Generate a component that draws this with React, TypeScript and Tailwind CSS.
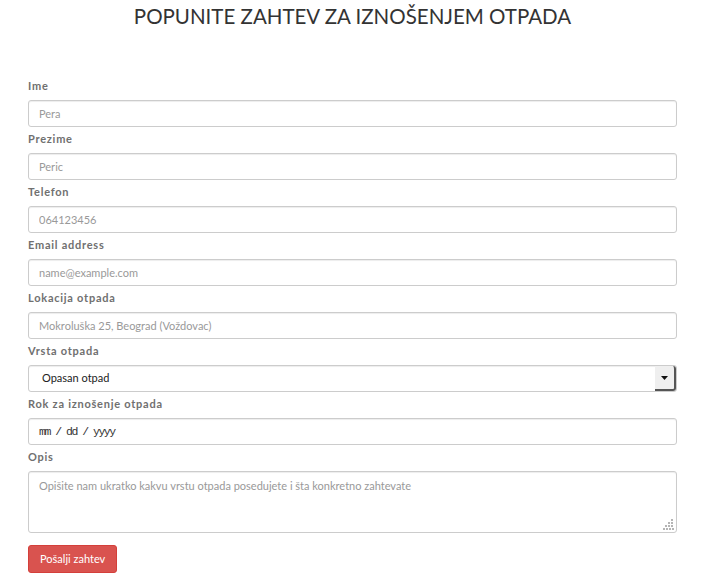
import React from "react";

const inputCls =
  "block w-full h-[27px] px-[10px] rounded-[3px] border border-[#cccccc] bg-white text-[11px] text-[#555] shadow-[inset_0_1px_1px_rgba(0,0,0,0.075)] outline-none placeholder:text-[#999]";

function Label({ children }: { children: React.ReactNode }) {
  return (
    <label className="block mt-[4px] mb-[6px] h-[16px] leading-[16px] text-[11px] font-bold text-[#707070] tracking-[0.75px]">
      {children}
    </label>
  );
}

export default function App() {
  const fields = [
    { label: "Ime", placeholder: "Pera" },
    { label: "Prezime", placeholder: "Peric" },
    { label: "Telefon", placeholder: "064123456" },
    { label: "Email address", placeholder: "name@example.com" },
    { label: "Lokacija otpada", placeholder: "Mokroluška 25, Beograd (Voždovac)" },
  ];

  return (
    <div className="min-h-[587px] bg-white font-['Lato','Liberation_Sans',sans-serif] text-[#333]">
      <h2 className="pt-[1px] h-[32px] leading-[30px] text-center text-[20.5px] font-normal text-[#333]">
        POPUNITE ZAHTEV ZA IZNOŠENJEM OTPADA
      </h2>

      <form className="mx-[28px] mt-[46px]" onSubmit={(e) => e.preventDefault()}>
        {fields.map((f) => (
          <div key={f.label}>
            <Label>{f.label}</Label>
            <input type="text" className={inputCls} placeholder={f.placeholder} />
          </div>
        ))}

        {/* Vrsta otpada */}
        <Label>Vrsta otpada</Label>
        <div className="relative flex h-[27px] w-full items-center rounded-[3px] border border-[#cccccc] bg-white shadow-[inset_0_1px_1px_rgba(0,0,0,0.075)]">
          <span className="pl-[13px] text-[11px] text-[#222]">Opasan otpad</span>
          <span className="ml-auto flex h-full w-[21px] items-center justify-center rounded-r-[3px] bg-[#efefef] border-r-2 border-b-2 border-[#555]">
            <svg width="7" height="4" viewBox="0 0 7 4">
              <path d="M0 0h7L3.5 4z" fill="#111" />
            </svg>
          </span>
        </div>

        {/* Rok */}
        <Label>Rok za iznošenje otpada</Label>
        <div className="flex h-[27px] w-full items-center rounded-[3px] border border-[#cccccc] bg-white px-[10px] shadow-[inset_0_1px_1px_rgba(0,0,0,0.075)]">
          <span className="font-['Liberation_Mono',monospace] text-[11.5px] tracking-[-1.5px] text-[#333]">
            mm / dd / yyyy
          </span>
        </div>

        {/* Opis */}
        <Label>Opis</Label>
        <div className="relative">
          <textarea
            className="block w-full h-[62px] resize-none px-[10px] py-[6px] rounded-[3px] border border-[#cccccc] bg-white text-[11px] text-[#555] shadow-[inset_0_1px_1px_rgba(0,0,0,0.075)] outline-none placeholder:text-[#999]"
            placeholder="Opišite nam ukratko kakvu vrstu otpada posedujete i šta konkretno zahtevate"
          />
          {/* resize grip */}
          <svg className="absolute right-[3px] bottom-[3px]" width="11" height="11" viewBox="0 0 11 11">
            <g fill="#b5b5b5">
              <rect x="8" y="0" width="2" height="2" />
              <rect x="5" y="3" width="2" height="2" />
              <rect x="8" y="3" width="2" height="2" />
              <rect x="2" y="6" width="2" height="2" />
              <rect x="5" y="6" width="2" height="2" />
              <rect x="8" y="6" width="2" height="2" />
              <rect x="0" y="9" width="2" height="2" />
              <rect x="3" y="9" width="2" height="2" />
              <rect x="6" y="9" width="2" height="2" />
              <rect x="9" y="9" width="2" height="2" />
            </g>
          </svg>
        </div>

        <button
          type="submit"
          className="mt-[12px] h-[28px] px-[11px] rounded-[3px] border border-[#d43f3a] bg-[#d9534f] text-[11px] text-white"
        >
          Pošalji zahtev
        </button>
      </form>
    </div>
  );
}
